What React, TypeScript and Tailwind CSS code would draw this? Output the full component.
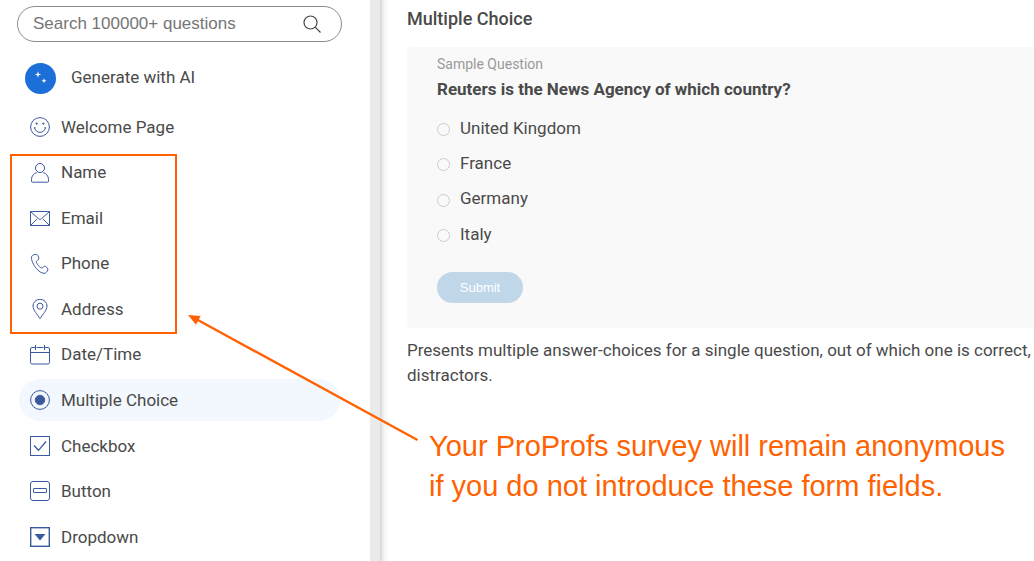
import React, { useState } from 'react';
import clsx from 'clsx';

interface IconProps {
  children: React.ReactNode;
  strokeWidth?: number;
}

function Icon({ children, strokeWidth = 1 }: IconProps) {
  return (
    <svg
      className="size-5 shrink-0 text-[#3b5a9e]"
      viewBox="0 0 20 20"
      fill="none"
      stroke="currentColor"
      strokeWidth={strokeWidth}
      aria-hidden="true"
    >
      {children}
    </svg>
  );
}

const fields = [
  {
    label: 'Welcome Page',
    icon: (
      <Icon>
        <circle cx="10" cy="10" r="9.4" />
        <path d="M4.6 10.8c.7 3 2.8 4.6 5.4 4.6s4.7-1.6 5.4-4.6M3.8 11l1.7-.4M16.2 11l-1.7-.4" />
        <circle cx="6.7" cy="6.6" r=".7" fill="currentColor" />
        <circle cx="13.3" cy="6.6" r=".7" fill="currentColor" />
      </Icon>
    ),
  },
  {
    label: 'Name',
    icon: (
      <Icon>
        <circle cx="10" cy="5" r="4.5" />
        <path d="M6.8 9.6C3.4 10.500 1.500 13.200 1.500 16.500v2a.7.7 0 0 0 .7.7h15.600a.7.7 0 0 0 .7-.7v-2c0-3.300-1.900-6-5.300-6.900" />
      </Icon>
    ),
  },
  {
    label: 'Email',
    icon: (
      <Icon>
        <path d="M.5 3.5h19v14H.5zM.5 3.5l8 7.200c.9.800 2.100.8 3 0l8-7.200M.8 17.200l6.400-6.400M19.200 17.200l-6.400-6.400" />
      </Icon>
    ),
  },
  {
    label: 'Phone',
    icon: (
      <Icon>
        <path d="M2.3 1.5C3.6.4 6.400.1 7.300.8c1.200 1 1.700 3.300 1.300 4.500-.4 1-2.200 1.300-2.300 2.400-.1 1.500 3.900 6.500 5.800 6.300 1.100-.1 1.300-1.800 2.400-1.900 1.300-.1 3.100 1.800 3.400 3 .2 1.100-1.100 3.100-2.400 3.900-1.700 1-4.700-.1-7.600-2.900C4.300 12.700 1.600 7.500 1.500 4.200c0-1.200.2-2.200.8-2.700z" />
      </Icon>
    ),
  },
  {
    label: 'Address',
    icon: (
      <Icon>
        <path d="M10 19.7C7.500 15.500 3 11.300 3 7a7 6.700 0 0 1 14 0c0 4.300-4.500 8.500-7 12.700z" />
        <circle cx="10" cy="7.2" r="3" />
      </Icon>
    ),
  },
  {
    label: 'Date/Time',
    icon: (
      <Icon>
        <path d="M4 2.500H2A1.500 1.500 0 0 0 .5 4v13.500A1.500 1.500 0 0 0 2 19h16a1.500 1.500 0 0 0 1.500-1.500V4A1.500 1.500 0 0 0 18 2.500h-2M6.500 2.500h7M.5 7.500h19M5.500 0v5M14.500 0v5M4 2.500h1.500M14.500 2.500H16" />
      </Icon>
    ),
  },
  {
    label: 'Multiple Choice',
    icon: (
      <Icon>
        <circle cx="10" cy="10" r="9.4" />
        <circle cx="10" cy="10" r="4.7" fill="currentColor" />
      </Icon>
    ),
  },
  {
    label: 'Checkbox',
    icon: (
      <Icon>
        <rect x=".5" y=".5" width="19" height="19" />
        <path d="M4 9.500l4.500 4.800L16 5.500" strokeWidth="1.3" />
      </Icon>
    ),
  },
  {
    label: 'Button',
    icon: (
      <Icon>
        <rect x=".5" y=".5" width="19" height="19" rx="2.5" />
        <rect x="3.5" y="7.5" width="13" height="4" rx=".5" />
      </Icon>
    ),
  },
  {
    label: 'Dropdown',
    icon: (
      <Icon strokeWidth={1.4}>
        <rect x=".7" y=".7" width="18.6" height="18.6" />
        <path d="M4.500 7h11L10 13.500z" fill="currentColor" stroke="none" />
      </Icon>
    ),
  },
];

const answers = ['United Kingdom', 'France', 'Germany', 'Italy'];

function Sidebar() {
  const [active, setActive] = useState('Multiple Choice');

  return (
    <aside className="w-[370px] shrink-0 pt-1.5">
      {/* Search */}
      <div className="relative ml-[17px] w-[325px]">
        <input
          type="text"
          aria-label="Search questions"
          placeholder="Search 100000+ questions"
          className="block h-9 w-full rounded-full border border-[#8c8c8c] pr-12 pl-[15px] font-['Liberation_Sans',sans-serif] text-[17px] outline-none placeholder:text-[#757575]"
        />
        <svg
          className="absolute top-2 right-5 size-5 text-[#444]"
          viewBox="0 0 20 20"
          fill="none"
          stroke="currentColor"
          strokeWidth="1.2"
          aria-hidden="true"
        >
          <circle cx="8.5" cy="8.5" r="6.5" />
          <path d="M13.2 13.2L18.5 18.5" />
        </svg>
      </div>

      <button type="button" className="mt-5 ml-[25px] flex h-8 items-center gap-[15px]">
        <span className="flex size-[31px] items-center justify-center rounded-full bg-[#1c6fd8]">
          <svg className="size-5" viewBox="0 0 20 20" fill="#fff" aria-hidden="true">
            <path d="M7 3.300l.8 2.400 2.400.8-2.400.8L7 9.700l-.8-2.400-2.400-.8 2.400-.8zM13 10.300l.7 1.800 1.800.7-1.800.7-.7 1.800-.7-1.800-1.800-.7 1.800-.7z" />
          </svg>
        </span>
        Generate with AI
      </button>

      {/* Question types */}
      <ul className="mt-3 ml-[19px] flex h-[452px] w-[321px] flex-col justify-between">
        {fields.map((field) => (
          <li key={field.label}>
            <button
              type="button"
              onClick={() => setActive(field.label)}
              className={clsx(
                'flex h-[42px] w-full items-center gap-[11px] rounded-full pl-[11px] text-left',
                active === field.label && 'bg-[#f2f8fd]'
              )}
            >
              {field.icon}
              <span className="pt-px">{field.label}</span>
            </button>
          </li>
        ))}
      </ul>
    </aside>
  );
}

function Preview() {
  return (
    <main className="min-w-0 flex-1 bg-linear-to-r from-[#d6d6d6] via-[#f4f4f4] via-[4px] to-white to-[9px] pt-1.5 pl-[27px]">
      <h1 className="text-[18px] leading-[26px] font-medium">Multiple Choice</h1>

      <form className="mt-[15px] rounded-l-sm bg-[#f9f9f9] px-[30px] pt-[7px] pb-[25px]" onSubmit={(e) => e.preventDefault()}>
        <p className="text-[14px] leading-5 text-[#999]">Sample Question</p>
        <fieldset>
          <legend className="text-[17px] leading-[30px] font-bold">
            Reuters is the News Agency of which country?
          </legend>
          <div className="mt-2 flex h-[141px] flex-col justify-between">
            {answers.map((answer) => (
              <label key={answer} className="flex h-[35px] items-center gap-2.5">
                <input
                  type="radio"
                  name="answer"
                  className="size-[13px] appearance-none rounded-full border border-[#ccc] checked:bg-[#3b5a9e]"
                />
                <span className="pb-0.5">{answer}</span>
              </label>
            ))}
          </div>
        </fieldset>
        <button
          type="submit"
          className="mt-[19px] block h-[31px] w-[86px] rounded-full bg-[#c0d7ea] font-['Liberation_Sans',sans-serif] text-[13px] text-white"
        >
          Submit
        </button>
      </form>

      <p className="mt-2.5 leading-[25px] whitespace-nowrap">
        Presents multiple answer-choices for a single question, out of which one is correct,
        <br />
        distractors.
      </p>
    </main>
  );
}

// Callout drawn over the page: frame, arrow and note
function Callout() {
  return (
    <div className="pointer-events-none absolute inset-0 text-[#ff6200]">
      <div className="absolute top-[154px] left-[10px] h-[180px] w-[167px] border-2 border-current" />
      <svg className="absolute top-[310px] left-[184px] h-[136px] w-[240px]" viewBox="184 310 240 136" aria-hidden="true">
        <path d="M196 319L417.5 440" stroke="currentColor" strokeWidth="2.4" />
        <path d="M188 315l12.6 1-4.6 8.8z" fill="currentColor" />
      </svg>
      <p className="absolute top-[426px] left-[429px] font-['Liberation_Sans',sans-serif] text-[29px] leading-10 whitespace-nowrap">
        Your ProProfs survey will remain anonymous
        <br />
        if you do not introduce these form fields.
      </p>
    </div>
  );
}

export default function App() {
  return (
    <div className="relative flex min-h-screen overflow-hidden bg-white font-[Roboto,sans-serif] text-[17px] text-[#4a4a4a]">
      <Sidebar />
      <div className="w-2.5 shrink-0 bg-[#eaeaea]" />
      <Preview />
      <Callout />
    </div>
  );
}
